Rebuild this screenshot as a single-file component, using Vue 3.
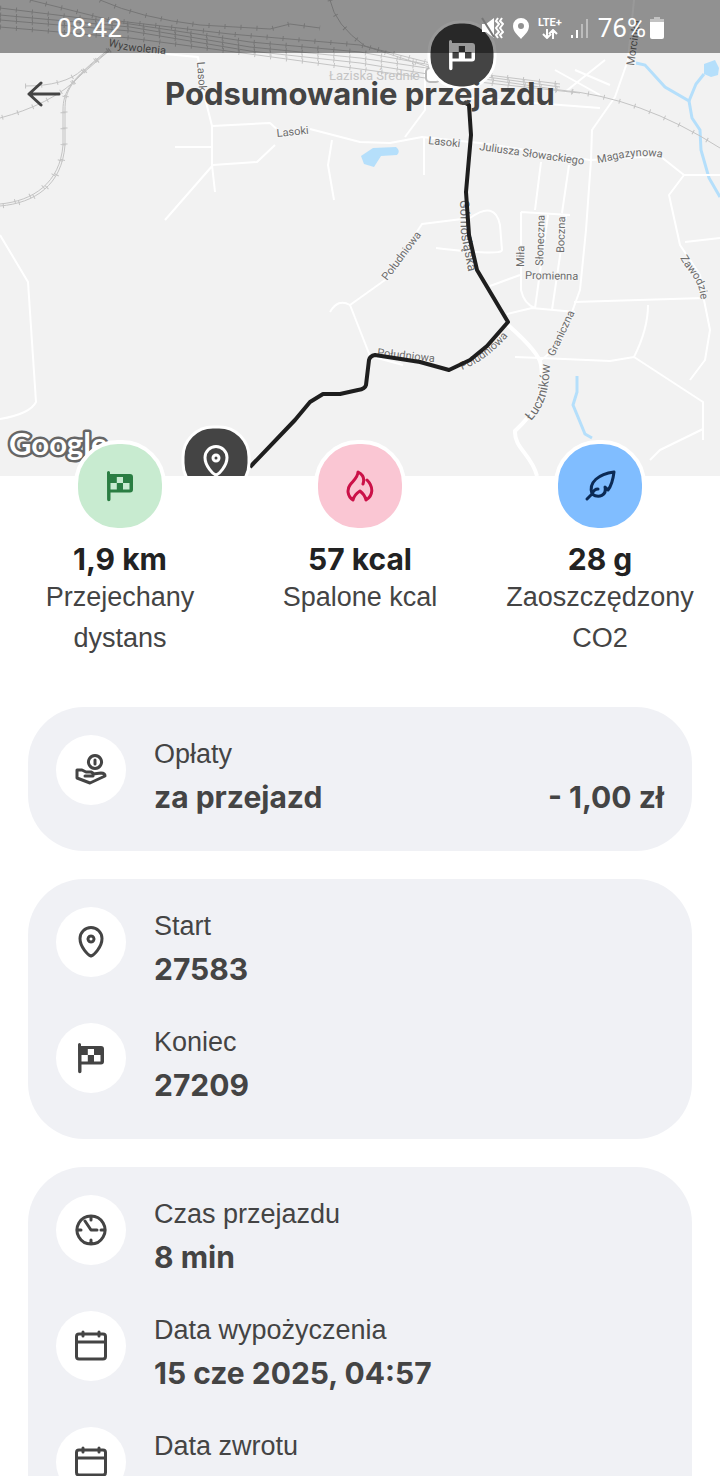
<template>
  <div class="app-root">
    <header class="hero">
      <!-- Map -->
      <svg class="map" viewBox="0 0 720 476" aria-label="Mapa przejazdu">
        <defs>
          <path id="p-wyz" d="M108 46 L130 51 L175 55" />
          <path id="p-gor" d="M460 200 L461 235 L468 270 L476 295" />
          <path id="p-luc" d="M531 421 C545 406 551 390 550 345" />
          <path id="p-zaw" d="M680 258 C690 275 700 280 701 303" />
          <path id="p-mag" d="M598 163 C615 161 635 151 668 159" />
          <path id="p-pol" d="M462 370 C480 363 495 351 510 334" />
        </defs>
        <rect width="720" height="476" fill="#f2f2f2" />

        <g class="water">
          <path v-for="d in rivers" :key="d" :d="d" />
          <path class="pond" d="M361 156 L373 148 L396 147 Q401 151 397 155 L381 156 L374 167 L364 164 Z" />
          <path class="pond" d="M704 64 L715 60 L719 68 L718 75 L711 77 L704 74 Z" />
        </g>

        <g class="roads">
          <path v-for="d in roads" :key="d" :d="d" />
        </g>
        <path class="road-main" d="M508 325 C525 340 540 355 541 365 C546 400 532 415 515 431 C514 448 532 455 537 476" />

        <g v-for="d in rails" :key="d" class="rail">
          <path :d="d" />
          <path class="ties" :d="d" />
        </g>

        <text class="district" x="329" y="80">Łaziska Średnie</text>
        <rect x="426" y="68" width="14" height="14" rx="4" fill="#fff" stroke="#bbb" stroke-width="2" />

        <g class="street">
          <text
            v-for="s in streets"
            :key="s.name + s.x"
            :transform="`translate(${s.x} ${s.y}) rotate(${s.angle})`"
          >{{ s.name }}</text>
          <text v-for="s in curved" :key="s.path" :class="{ big: s.big }">
            <textPath :href="s.path">{{ s.name }}</textPath>
          </text>
        </g>

        <path
          class="route"
          d="M464 102 L469 105 L471 135 L466 192 L469 235 L477 270 L508 322 L487 346 L470 360 L449 370 L420 362 L375 355 Q370 356 369 360 L366 385 Q365 389 358 390 L340 394 L323 394 L310 402 L295 420 L250 467"
        />

        <text class="google" x="9" y="455">Google</text>

        <g transform="translate(216 460)">
          <rect class="marker" x="-33" y="-33" width="66" height="66" rx="30" />
          <g class="marker-pin" transform="translate(-16 -15)">
            <path :d="pinPath" />
            <circle cx="16" cy="13" r="3" />
          </g>
        </g>
        <g transform="translate(462 55)">
          <rect class="marker" x="-33" y="-33" width="66" height="66" rx="31" />
          <path class="marker-flag" transform="translate(-16 -16)" :d="flagPath" />
        </g>
      </svg>

      <!-- Status bar -->
      <div class="status-bar">
        <span class="clock">08:42</span>
        <div class="indicators">
          <svg width="24" height="24" viewBox="0 0 24 24">
            <path d="M2 8h4l8-6v20l-8-6H2z" fill="#fff" />
            <path d="M2 2l12 19" stroke="#777" stroke-width="2" />
            <path d="M18 2l-2 3 3 3-3 4 3 4-3 3 2 3M22 2l-2 3 3 3-3 4 3 4-3 3 2 3" fill="none" stroke="#fff" stroke-width="2" />
          </svg>
          <svg width="18" height="24" viewBox="0 0 18 24">
            <path
              d="M9 2a8 8 0 0 1 8 8c0 6-5 9-8 13C6 19 1 16 1 10a8 8 0 0 1 8-8zm0 5a3 3 0 1 0 0 6 3 3 0 0 0 0-6z"
              fill="#fff"
              fill-rule="evenodd"
            />
          </svg>
          <div class="lte">
            <span>LTE+</span>
            <svg width="16" height="10" viewBox="0 0 16 10">
              <path d="M5 0v8M1 5l4 4 4-4M11 10V2M7 5l4-4 4 4" fill="none" stroke="#fff" stroke-width="2" />
            </svg>
          </div>
          <svg width="20" height="22" viewBox="0 0 20 22">
            <path d="M1 18h2v3H1zM6 13h2v8H6z" fill="#fff" />
            <path d="M11 7h2v14h-2zM16 2h2v19h-2z" fill="#fff" opacity=".4" />
          </svg>
          <span class="battery-text">76%</span>
          <svg width="14" height="22" viewBox="0 0 14 22">
            <path d="M4 0h6v2h4v4H0V2h4z" fill="#fff" opacity=".45" />
            <path d="M0 5h14v15a2 2 0 0 1-2 2H2a2 2 0 0 1-2-2z" fill="#fff" />
          </svg>
        </div>
      </div>

      <!-- Title bar -->
      <div class="title-bar">
        <button class="back" type="button" aria-label="Wstecz">
          <svg width="34" height="28" viewBox="0 0 34 28">
            <path
              d="M32 14H2M14 3L2 14l12 11"
              fill="none"
              stroke="#444"
              stroke-width="3"
              stroke-linecap="round"
              stroke-linejoin="round"
            />
          </svg>
        </button>
        <h1>Podsumowanie przejazdu</h1>
      </div>
    </header>

    <main>
      <section class="stats">
        <div v-for="stat in stats" :key="stat.label" class="stat">
          <div class="stat-icon" :class="stat.tone">
            <svg width="32" height="32" viewBox="0 0 32 32">
              <path v-if="stat.tone === 'green'" class="solid" :d="flagPath" />
              <path v-else :d="stat.icon" />
            </svg>
          </div>
          <strong>{{ stat.value }}</strong>
          <span>{{ stat.label }}</span>
        </div>
      </section>

      <div class="cards">
        <section v-for="(card, index) in cards" :key="index" class="card">
          <div v-for="row in card" :key="row.label" class="row">
            <div class="row-icon">
              <svg width="32" height="32" viewBox="0 0 32 32">
                <path v-if="row.icon === 'flag'" class="solid" :d="flagPath" />
                <path v-else :d="icons[row.icon]" />
              </svg>
            </div>
            <div class="row-text">
              <span class="label">{{ row.label }}</span>
              <div class="value">
                <strong v-if="row.value">{{ row.value }}</strong>
                <strong v-if="row.amount">{{ row.amount }}</strong>
              </div>
            </div>
          </div>
        </section>
      </div>
    </main>
  </div>
</template>

<script setup>
const flagPath =
  "M3 2.5a1.500 1.500 0 0 1 3 0V4H26a3 3 0 0 1 3 3V19.500a3 3 0 0 1-3 3H6.500V29.500a1.700 1.700 0 0 1-3.400 0z" +
  "M12.800 7V13H19V7zM6.500 13V19.500H12.800V13zM19 13V19.500H25.500V13z";
const pinPath = "M16 30C13 29 5 21 5 12.500A11 11 0 0 1 27 12.500C27 21 19 29 16 30Z";

const icons = {
  hand: "M20 1.500a6.500 6.500 0 1 0 .01 0zM20 6v4M2 16l5 0 4 2h5q3 1 2 4h-8M18 20l8-1q4 0 4 3l-15 7-13-5v-8",
  pin: pinPath + "M16 10a3 3 0 1 0 .01 0z",
  clock: "M16 2a14 14 0 1 0 .01 0zM16 2v4M16 26v4M2 16h4M26 16h4M10 7L16 16h6",
  calendar: "M4 4h24q2.500 0 2.500 2.500v20q0 2.500-2.500 2.500H4q-2.500 0-2.500-2.500v-20Q1.500 4 4 4zM2 12h28M8 2v4M24 2v4",
};

const stats = [
  { tone: "green", value: "1,9 km", label: "Przejechany dystans" },
  {
    tone: "pink",
    value: "57 kcal",
    label: "Spalone kcal",
    icon: "M9 30C3 26 3 19 6 15C10 10 14 7 14 2C18 4 21 8 19 14M23 10C30 17 29 26 22 30Q21 25 16 21Q10 25 9 30",
  },
  {
    tone: "blue",
    value: "28 g",
    label: "Zaoszczędzony CO2",
    icon: "M3 29L8 24C4 12 15 4 30 2C29 10 28 15 24 20L21 17C23 25 15 29 8 24M8 24Q10 19 14 19",
  },
];

const cards = [
  [{ icon: "hand", label: "Opłaty", value: "za przejazd", amount: "- 1,00 zł" }],
  [
    { icon: "pin", label: "Start", value: "27583" },
    { icon: "flag", label: "Koniec", value: "27209" },
  ],
  [
    { icon: "clock", label: "Czas przejazdu", value: "8 min" },
    { icon: "calendar", label: "Data wypożyczenia", value: "15 cze 2025, 04:57" },
    { icon: "calendar", label: "Data zwrotu" },
  ],
];

// Map layers
const rivers = [
  "M636 63 L645 65 L665 87 L689 101 L692 118 L700 130 L701 150 L709 178 L720 197",
  "M689 101 L696 84 L704 74",
  "M577 376 L577 392 L573 405 L585 434 L592 438",
];

const roads = [
  "M165 54 L198 57 L203 90 L212 126 L270 123 L280 132 M310 129 L360 142 L390 143 L422 137 L480 143 L590 160 L660 156 L684 175 L720 175",
  "M175 147 H213 M212 126 V165 L215 192 M165 220 L213 165 L257 162 L275 145",
  "M332 140 L328 165 L334 200 M424 137 L424 175 M425 60 V110 L405 137",
  "M634 0 L628 60 L615 97 L592 130 L591 160 L586 230 L580 290 L560 345 L541 360",
  "M684 175 L669 195 L680 245 L700 275 L704 300 L710 330 L705 360 L690 380 M685 242 L720 238",
  "M574 302 L704 298 M648 305 C648 325 640 345 634 357",
  "M350 305 L385 280 L422 224 L470 218 M350 305 L370 356 L403 365 M330 312 Q338 298 350 305",
  "M541 162 L535 210 M569 165 L562 213 M521 212 L570 215 M521 212 V290 Q524 304 535 308 L548 215 M552 310 L566 215",
  "M490 286 L520 275 M507 314 L532 308 L575 312 M470 218 Q495 200 500 225 L502 250 Q502 256 436 248",
  "M515 357 L541 358 L610 361 L634 357 L703 402 V440 M703 429 L660 450 L650 460",
  "M0 235 L28 282 L36 402 Q30 414 0 419",
  "M555 70 L600 95 M565 92 L605 60 M575 70 L610 85 M470 98 L600 108",
];

const rails = [
  "M0 8 L130 24 L250 42 L360 52 L480 74 L560 84",
  "M0 15 L130 27 L250 47 L360 58 L480 76 L560 87",
  "M0 20 L130 31 L250 51 L360 63 L440 76",
  "M0 27 L130 38 L250 54 L360 69 L440 80",
  "M30 0 L110 20 L230 34 L360 45 L450 68",
  "M100 0 Q140 18 200 25 L270 29 L290 24 L320 28",
  "M330 0 Q335 25 365 46 L450 74 L560 90 Q640 97 720 148",
  "M460 80 L580 93",
  "M110 50 C70 80 65 90 65 110 V145 C62 185 35 203 0 206",
  "M108 50 C70 80 63 92 63 110 V145 C60 183 33 201 0 204",
  "M110 50 L82 74 C62 96 30 110 0 118",
  "M25 86 Q65 86 82 70",
];

const streets = [
  { name: "Lasok", x: 197, y: 62, angle: 86 },
  { name: "Lasoki", x: 277, y: 137, angle: -6 },
  { name: "Lasoki", x: 428, y: 144, angle: 6 },
  { name: "Juliusza Słowackiego", x: 479, y: 150, angle: 8 },
  { name: "Morcinka", x: 634, y: 66, angle: -82 },
  { name: "Miła", x: 524, y: 267, angle: -89 },
  { name: "Słoneczna", x: 543, y: 266, angle: -88 },
  { name: "Boczna", x: 564, y: 253, angle: -88 },
  { name: "Promienna", x: 525, y: 279, angle: 1 },
  { name: "Graniczna", x: 554, y: 357, angle: -65 },
  { name: "Południowa", x: 387, y: 281, angle: -53 },
  { name: "Południowa", x: 377, y: 356, angle: 6 },
];

const curved = [
  { name: "Wyzwolenia", path: "#p-wyz" },
  { name: "Górnośląska", path: "#p-gor", big: true },
  { name: "Łuczników", path: "#p-luc", big: true },
  { name: "Zawodzie", path: "#p-zaw" },
  { name: "Magazynowa", path: "#p-mag" },
  { name: "Południowa", path: "#p-pol" },
];
</script>

<style>
body {
  margin: 0;
  background: #fff;
}
</style>

<style scoped>
.app-root {
  height: 100vh;
  overflow: hidden;
  background: #fff;
  color: #444;
  font-family: Inter, "Liberation Sans", sans-serif;
}

.hero {
  position: relative;
}

/* Map */
.map {
  display: block;
  width: 100%;
  height: auto;
}

.roads path,
.road-main {
  fill: none;
  stroke: #fff;
  stroke-width: 2;
  stroke-linejoin: round;
}

.road-main {
  stroke-width: 4;
}

.water path {
  fill: none;
  stroke: #b5dffb;
  stroke-width: 3;
}

.water .pond {
  fill: #b5dffb;
  stroke: none;
}

.rail path {
  fill: none;
  stroke: #c4c4c4;
  stroke-width: 1;
}

.rail .ties {
  stroke-width: 5;
  stroke-dasharray: 1 15;
}

.street {
  font-family: Roboto, sans-serif;
  font-size: 11px;
  fill: #6b6b6b;
  stroke: #f6f6f6;
  stroke-width: 2;
  paint-order: stroke;
}

.street .big {
  font-size: 13px;
}

.district {
  font-family: Roboto, sans-serif;
  font-size: 13px;
  fill: #c4c4c4;
}

.route {
  fill: none;
  stroke: #1e1e1e;
  stroke-width: 4;
  stroke-linejoin: round;
}

.marker {
  fill: #444;
  stroke: #fff;
  stroke-width: 3;
}

.marker-pin {
  fill: none;
  stroke: #fff;
  stroke-width: 3;
}

.marker-flag {
  fill: #fff;
  fill-rule: evenodd;
}

.google {
  font-family: Lato, sans-serif;
  font-size: 31px;
  font-weight: 700;
  fill: #fff;
  stroke: #666;
  stroke-width: 5;
  stroke-linejoin: round;
  paint-order: stroke;
}

/* Status bar */
.status-bar {
  position: absolute;
  top: 0;
  left: 0;
  right: 0;
  height: 53px;
  box-sizing: border-box;
  padding: 3px 56px 0 57px;
  display: flex;
  align-items: center;
  justify-content: space-between;
  background: rgba(0, 0, 0, 0.4);
  color: #fff;
  font-family: Roboto, sans-serif;
  font-size: 26px;
}

.indicators {
  display: flex;
  align-items: center;
  gap: 8px;
}

.lte {
  display: flex;
  flex-direction: column;
  align-items: center;
  font-size: 11px;
  font-weight: 700;
  line-height: 12px;
}

.battery-text {
  margin-right: -4px;
}

/* Title bar */
.title-bar {
  position: absolute;
  top: 66px;
  left: 0;
  right: 0;
  height: 56px;
  padding: 0 27px;
  display: grid;
  grid-template-columns: 34px 1fr 34px;
  align-items: center;
}

.back {
  padding: 0;
  border: none;
  background: none;
  height: 28px;
  cursor: pointer;
}

h1 {
  margin: 0;
  font-size: 31px;
  font-weight: 700;
  line-height: 52px;
  text-align: center;
  white-space: nowrap;
}

/* Stats */
.stats {
  position: relative;
  margin-top: -36px;
  display: grid;
  grid-template-columns: repeat(3, minmax(0, 1fr));
}

.stat {
  display: flex;
  flex-direction: column;
  align-items: center;
  text-align: center;
  padding: 0 24px;
}

.stat-icon {
  width: 84px;
  height: 84px;
  border: 4px solid #fff;
  border-radius: 44px;
  display: flex;
  align-items: center;
  justify-content: center;
}

.stat-icon.green {
  background: #c8ebd0;
  color: #2a7d42;
}

.stat-icon.pink {
  background: #fac6d3;
  color: #cb1148;
}

.stat-icon.blue {
  background: #80bdff;
  color: #0b2a55;
}

.stat strong {
  margin-top: 10px;
  font-size: 30px;
  line-height: 35px;
  color: #222;
}

.stat span {
  font-family: "Liberation Sans", Arial, sans-serif;
  font-size: 27px;
  line-height: 41px;
}

.stat-icon path,
.row-icon path {
  fill: none;
  stroke: currentColor;
  stroke-width: 3;
  stroke-linecap: round;
  stroke-linejoin: round;
}

.stat-icon .solid,
.row-icon .solid {
  fill: currentColor;
  fill-rule: evenodd;
  stroke: none;
}

/* Cards */
.cards {
  padding: 48px 28px 28px;
  display: flex;
  flex-direction: column;
  gap: 28px;
}

.card {
  display: flex;
  flex-direction: column;
  gap: 28px;
  padding: 28px;
  border-radius: 56px;
  background: #f0f1f5;
}

.row {
  display: flex;
  gap: 28px;
}

.row-icon {
  flex-shrink: 0;
  width: 70px;
  height: 70px;
  border-radius: 35px;
  background: #fff;
  display: flex;
  align-items: center;
  justify-content: center;
}

.row-text {
  flex: 1;
  padding-bottom: 2px;
}

.label {
  display: block;
  font-family: "Liberation Sans", Arial, sans-serif;
  font-size: 27px;
  line-height: 38px;
}

.value {
  display: flex;
  justify-content: space-between;
  min-height: 48px;
  font-size: 30px;
  line-height: 48px;
}
</style>
